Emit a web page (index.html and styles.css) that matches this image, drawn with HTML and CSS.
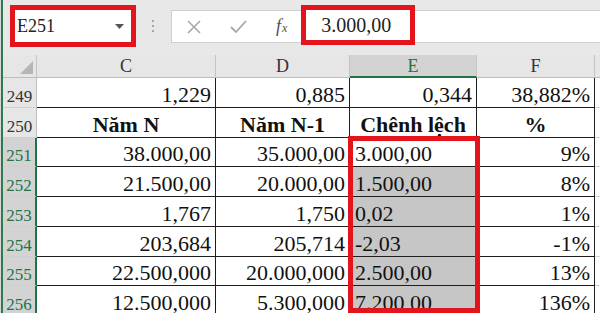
FILE: index.html
```html
<!DOCTYPE html>
<html lang="vi">
<head>
<meta charset="utf-8">
<title>Excel</title>
<link rel="stylesheet" href="styles.css">
</head>
<body>
<div class="app">
  <div class="toolbar">
    <div class="namebox">
      <span>E251</span>
      <svg class="caret" width="9" height="5" viewBox="0 0 9 5"><path d="M0 0H9L4.5 5Z" fill="#555"/></svg>
    </div>
    <div class="dots"><i></i><i></i><i></i></div>
    <div class="fbar">
      <svg class="ic-x" width="14" height="14" viewBox="0 0 14 14"><path d="M1 1L13 13M13 1L1 13" stroke="#a8a8a8" stroke-width="1.6" fill="none"/></svg>
      <svg class="ic-ok" width="17" height="13" viewBox="0 0 17 13"><path d="M1 7L6 12L16 1" stroke="#a8a8a8" stroke-width="1.8" fill="none"/></svg>
      <span class="fx"><span class="fx-f">f</span><span class="fx-x">x</span></span>
      <div class="fval">3.000,00</div>
    </div>
  </div>
  <div class="sheet">
    <div class="h corner"><svg width="13" height="13" viewBox="0 0 13 13"><path d="M13 0V13H0Z" fill="#b5b5b5"/></svg></div>
    <div class="h">C</div>
    <div class="h">D</div>
    <div class="h sel">E</div>
    <div class="h">F</div>
    <div class="h"></div>

    <div class="r">249</div>
    <div class="c">1,229</div><div class="c">0,885</div><div class="c">0,344</div><div class="c">38,882%</div><div class="c g"></div>

    <div class="r">250</div>
    <div class="c b">Năm N</div><div class="c b">Năm N-1</div><div class="c b">Chênh lệch</div><div class="c b">%</div><div class="c g"></div>

    <div class="r sel">251</div>
    <div class="c">38.000,00</div><div class="c">35.000,00</div><div class="c e">3.000,00</div><div class="c">9%</div><div class="c g"></div>

    <div class="r sel">252</div>
    <div class="c">21.500,00</div><div class="c">20.000,00</div><div class="c e gray">1.500,00</div><div class="c">8%</div><div class="c g"></div>

    <div class="r sel">253</div>
    <div class="c">1,767</div><div class="c">1,750</div><div class="c e gray">0,02</div><div class="c">1%</div><div class="c g"></div>

    <div class="r sel">254</div>
    <div class="c">203,684</div><div class="c">205,714</div><div class="c e gray">-2,03</div><div class="c">-1%</div><div class="c g"></div>

    <div class="r sel">255</div>
    <div class="c">22.500,000</div><div class="c">20.000,000</div><div class="c e gray">2.500,00</div><div class="c">13%</div><div class="c g"></div>

    <div class="r sel">256</div>
    <div class="c">12.500,000</div><div class="c">5.300,000</div><div class="c e gray">7.200,00</div><div class="c">136%</div><div class="c g"></div>

    <div class="mark"></div>
  </div>
</div>
</body>
</html>
```

FILE: styles.css
```css
html, body {
  margin: 0;
  padding: 0;
}
body {
  width: 600px;
  height: 313px;
  overflow: hidden;
  background: #d6d6d6;
  font-family: "Liberation Serif", "Times New Roman", serif;
}
.app {
  margin-left: 1px;
  border-left: 2px solid #2f7a50;
  height: 313px;
  background: #fff;
  overflow: hidden;
}
.toolbar {
  height: 55px;
  display: flex;
  align-items: flex-start;
  background: #e8e8e8;
}
.namebox {
  margin: 5px 0 0 7px;
  width: 126px;
  height: 42px;
  box-sizing: border-box;
  border: 5px solid #e3141b;
  background: #fff;
  display: flex;
  align-items: center;
  justify-content: space-between;
  padding: 0 7px 0 2px;
  font-size: 18px;
  line-height: 18px;
  color: #222;
}
.caret {
  margin-top: 1px;
}
.dots {
  margin: 20px 0 0 16px;
  display: flex;
  flex-direction: column;
  gap: 3px;
}
.dots i {
  display: block;
  width: 2px;
  height: 2px;
  background: #a4a4a4;
}
.fbar {
  margin: 10px 0 0 17px;
  flex: 1;
  height: 33px;
  box-sizing: border-box;
  border: 1px solid #cfcfcf;
  border-right: none;
  background: #fff;
  display: flex;
  align-items: center;
}
.ic-x {
  margin-left: 15px;
}
.ic-ok {
  margin-left: 29px;
}
.fx {
  margin-left: 29px;
  font-style: italic;
  color: #505050;
  display: flex;
  align-items: baseline;
}
.fx-f {
  font-size: 18px;
}
.fx-x {
  font-size: 12px;
  margin-left: 1px;
}
.fval {
  align-self: stretch;
  margin: -6px 0 -3px 14px;
  width: 114px;
  box-sizing: border-box;
  border: 5px solid #e3141b;
  background: #fff;
  padding-left: 15px;
  display: flex;
  align-items: center;
  font-size: 20px;
  line-height: 20px;
  color: #222;
}
.sheet {
  position: relative;
  display: grid;
  grid-template-columns: 34px 179px 134px 127px 118px 1fr;
  grid-template-rows: 23px repeat(8, 29.75px);
}
.h {
  box-sizing: border-box;
  background: #e6e6e6;
  border-right: 1px solid #c4c4c4;
  border-bottom: 1px solid #bdbdbd;
  display: flex;
  align-items: center;
  justify-content: center;
  font-size: 18px;
  line-height: 18px;
  color: #333;
}
.h.sel {
  background: #d3d3d3;
  color: #217346;
  border-bottom: 2px solid #217346;
}
.corner {
  justify-content: flex-end;
  align-items: flex-end;
  padding: 0 3px 3px 0;
}
.r {
  box-sizing: border-box;
  background: #e6e6e6;
  border-right: 1px solid #bdbdbd;
  border-bottom: 1px solid #cfcfcf;
  display: flex;
  align-items: flex-end;
  justify-content: center;
  padding-bottom: 2px;
  font-size: 17px;
  line-height: 17px;
  color: #333;
}
.r.sel {
  background: #d3d3d3;
  color: #217346;
  border-right: 2px solid #217346;
}
.c {
  box-sizing: border-box;
  border-right: 1px solid #1e1e1e;
  border-bottom: 1px solid #1e1e1e;
  display: flex;
  align-items: flex-end;
  justify-content: flex-end;
  padding: 0 4px 1px 4px;
  font-size: 22px;
  line-height: 22px;
  color: #111;
  white-space: nowrap;
  overflow: hidden;
}
.c.b {
  font-weight: bold;
  justify-content: center;
}
.c.e {
  justify-content: flex-start;
  padding-left: 5px;
}
.c.gray {
  background: #c6c6c6;
}
.c.g {
  border-right: none;
  border-bottom: 1px solid #d4d4d4;
}
.mark {
  position: absolute;
  left: 345px;
  top: 81px;
  width: 132px;
  height: 177px;
  box-sizing: border-box;
  border: 5px solid #e3141b;
  pointer-events: none;
}
```
